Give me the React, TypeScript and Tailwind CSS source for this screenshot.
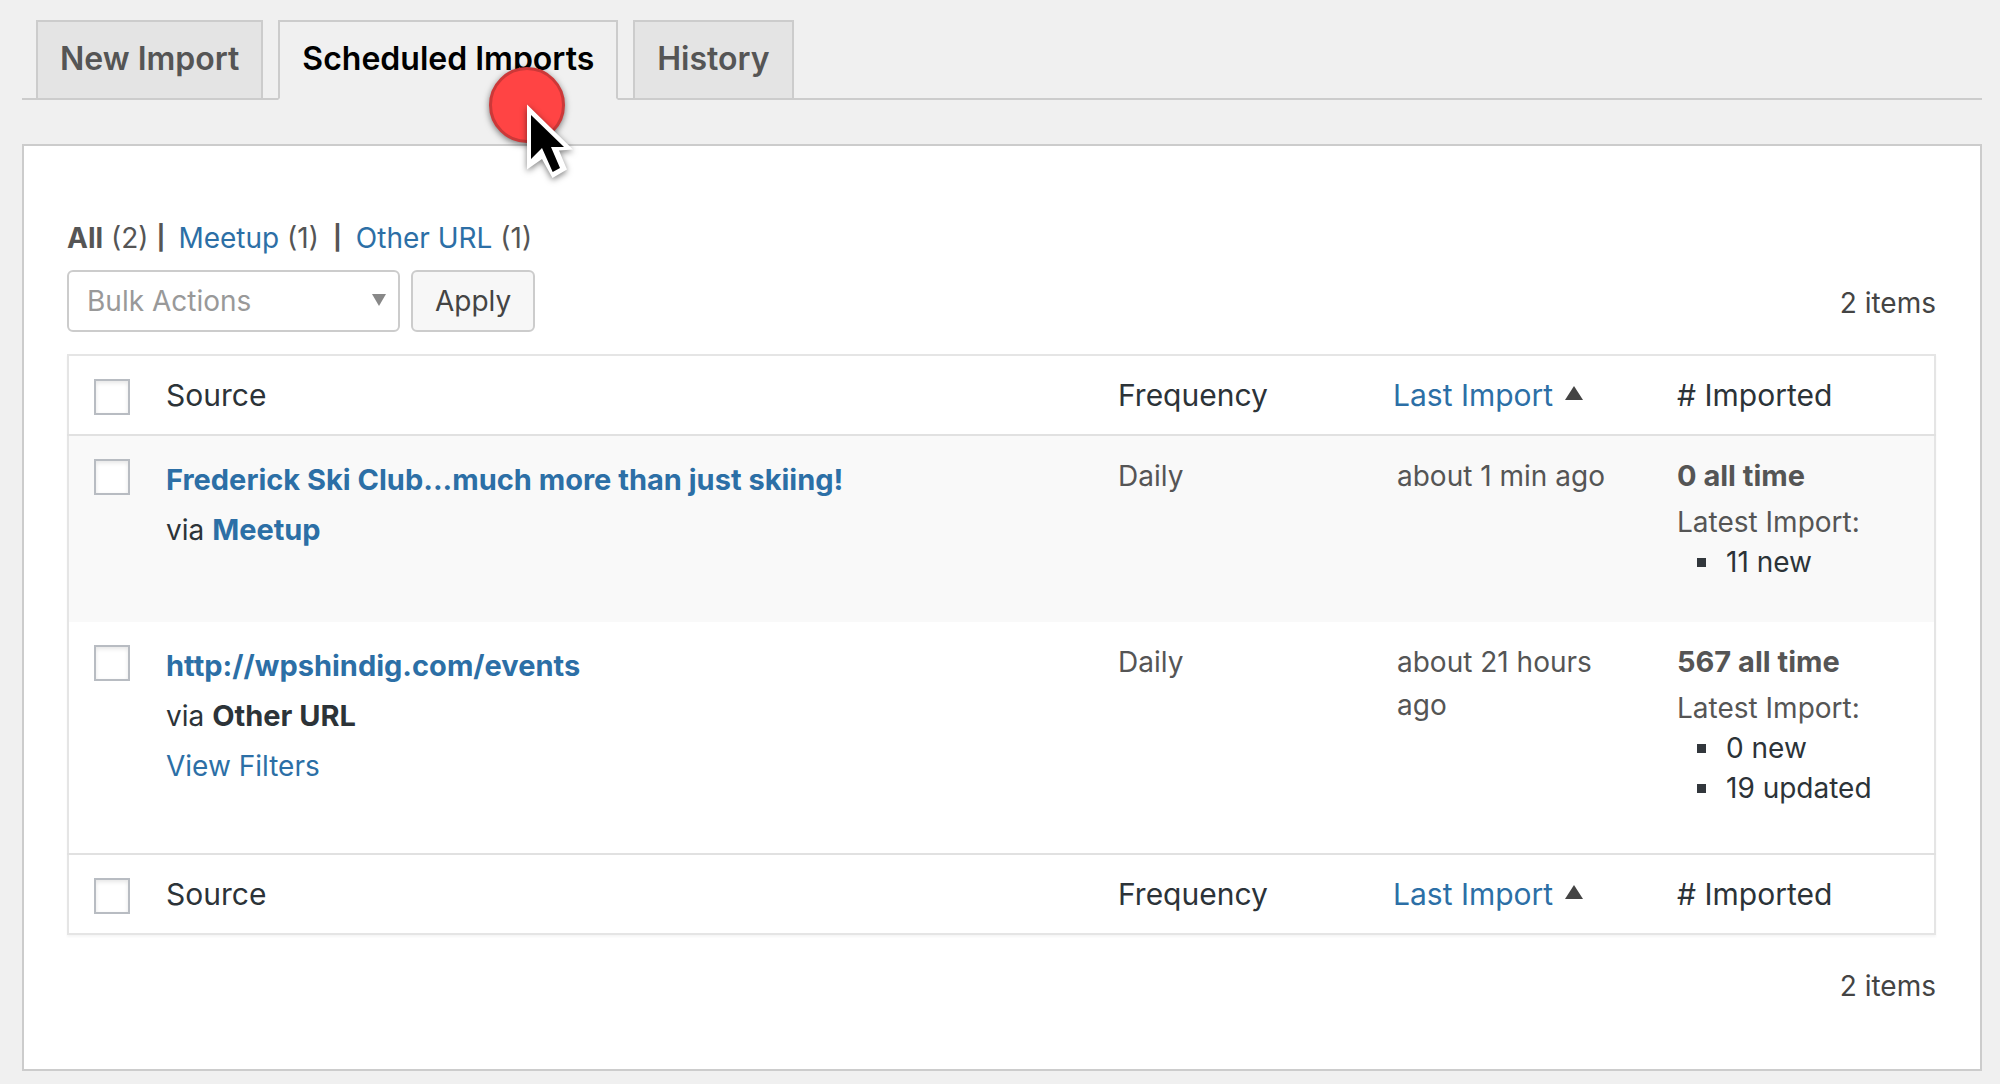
import React from 'react';

const tabs = ['New Import', 'Scheduled Imports', 'History'];

const rows = [
  {
    title: 'Frederick Ski Club...much more than just skiing!',
    origin: 'Meetup',
    originLinked: true,
    filters: false,
    frequency: 'Daily',
    lastImport: 'about 1 min ago',
    total: '0 all time',
    latest: ['11 new'],
  },
  {
    title: 'http://wpshindig.com/events',
    origin: 'Other URL',
    originLinked: false,
    filters: true,
    frequency: 'Daily',
    lastImport: 'about 21 hours ago',
    total: '567 all time',
    latest: ['0 new', '19 updated'],
  },
];

function Checkbox({ label }: { label: string }) {
  return (
    <input
      type="checkbox"
      aria-label={label}
      className="block w-9 h-9 appearance-none border-2 border-[#b8bcc2] bg-white shadow-[inset_0_2px_4px_rgba(0,0,0,0.1)] checked:bg-[#2c6fa6]"
    />
  );
}

function HeadingRow({ label }: { label: string }) {
  return (
    <tr className="h-20 text-left text-[30px] leading-10 text-[#2c3338]">
      <td className="pl-[25px] pt-1">
        <Checkbox label={label} />
      </td>
      <th scope="col" className="font-normal">Source</th>
      <th scope="col" className="font-normal">Frequency</th>
      <th scope="col" className="font-normal">
        <a href="#last-import" className="inline-flex items-center gap-3 text-[#2c6fa6]">
          Last Import
          <svg viewBox="0 0 18 14" className="mb-1 w-[18px] h-[14px] fill-[#444]" aria-hidden="true">
            <path d="M9 0l9 14H0z" />
          </svg>
        </a>
      </th>
      <th scope="col" className="font-normal"># Imported</th>
    </tr>
  );
}

function Pointer() {
  return (
    <svg
      viewBox="0 0 100 130"
      className="absolute left-[202px] top-10 z-10 w-[100px] h-[130px] pointer-events-none overflow-visible"
      aria-hidden="true"
    >
      <circle
        cx="47"
        cy="45"
        r="36.5"
        fill="#ff4444"
        stroke="#cc3838"
        strokeWidth="3"
        className="drop-shadow-[0_2px_3px_rgba(0,0,0,0.5)]"
      />
      <g className="drop-shadow-[0_2px_3px_rgba(0,0,0,0.5)]">
        <path d="M47 44.5L93 89.5 79 90.5 87 109.5 72.5 118 62 99 47 109.5z" fill="#fff" />
        <path d="M51 55L84 87H71L80 108 72.7 112 62 88 51 99z" fill="#000" />
      </g>
    </svg>
  );
}

export default function App() {
  return (
    <div className="min-h-screen bg-[#f0f0f0] pr-[18px] pt-5 pb-[14px] pl-[22px] font-['Inter','Liberation_Sans',sans-serif] text-[#555]">
      <nav className="flex gap-[15px] border-b-2 border-[#ccc] pl-[14px]">
        {tabs.map((tab) => {
          const active = tab === 'Scheduled Imports';
          return (
            <div key={tab} className="relative">
              <a
                href="#tab"
                aria-current={active ? 'page' : undefined}
                className={`-mb-[2px] block border-2 px-[22px] pt-[17px] pb-[19px] text-[32px] leading-10 font-semibold ${
                  active ? 'border-[#ccc] border-b-[#f0f0f0] bg-[#f0f0f0] text-black' : 'border-[#ccc] bg-[#e4e4e4] text-[#555]'
                }`}
              >
                {tab}
              </a>
              {active && <Pointer />}
            </div>
          );
        })}
      </nav>

      <main className="mt-11 border-2 border-[#ccc] bg-white pl-[43px] pr-11 pt-[72px] pb-[63px]">
        <ul className="flex items-center text-[28px] leading-10">
          <li><b>All</b> (2)</li>
          <li aria-hidden="true" className="ml-2 mr-[13px] text-[24px] font-bold">|</li>
          <li><a href="#meetup" className="text-[#2c6fa6]">Meetup</a> (1)</li>
          <li aria-hidden="true" className="mx-[14px] text-[24px] font-bold">|</li>
          <li><a href="#other" className="text-[#2c6fa6]">Other URL</a> (1)</li>
        </ul>

        <div className="mt-3 flex items-center gap-[11px]">
          <div className="relative">
            <select
              aria-label="Bulk Actions"
              className="block w-[333px] h-[62px] appearance-none rounded-md border-2 border-[#ccc] bg-white pl-[18px] text-[28px] text-[#999]"
            >
              <option>Bulk Actions</option>
            </select>
            <svg viewBox="0 0 14 12" className="absolute right-[14px] top-6 w-[14px] h-3 fill-[#888] pointer-events-none" aria-hidden="true">
              <path d="M0 0h14L7 12z" />
            </svg>
          </div>
          <button type="button" className="h-[62px] rounded-md border-2 border-[#ccc] bg-[#f7f7f7] px-[22px] text-[28px] text-[#444]">
            Apply
          </button>
          <span className="ml-auto pt-1 text-[28px] leading-10 text-[#444]">2 items</span>
        </div>

        <table className="mt-[22px] w-full table-fixed border-collapse border-2 border-[#e5e5e5] shadow-[0_2px_2px_rgba(0,0,0,0.04)]">
          <colgroup>
            <col className="w-[98px]" />
            <col />
            <col className="w-[275px]" />
            <col className="w-[284px]" />
            <col className="w-[258px]" />
          </colgroup>
          <thead className="border-b-2 border-[#e1e1e1]">
            <HeadingRow label="Select all" />
          </thead>
          <tbody>
            {rows.map((row) => (
              <tr key={row.title} className="align-top text-[28px] leading-10 odd:bg-[#f9f9f9]">
                <td className="pl-[25px] pt-[23px]">
                  <Checkbox label={`Select ${row.title}`} />
                </td>
                <td className="pt-[19px] pb-[62px] leading-[50px] text-[#2c3338]">
                  <a href="#source" className="block text-[29px] font-bold text-[#2c6fa6]">{row.title}</a>
                  <p>
                    via{' '}
                    {row.originLinked ? (
                      <a href="#origin" className="text-[29px] font-bold text-[#2c6fa6]">{row.origin}</a>
                    ) : (
                      <b className="text-[29px]">{row.origin}</b>
                    )}
                  </p>
                  {row.filters && <a href="#filters" className="block text-[#2c6fa6]">View Filters</a>}
                </td>
                <td className="pt-5">{row.frequency}</td>
                <td className="pt-[19px] pl-1 pr-10 leading-[43px]">{row.lastImport}</td>
                <td className="pt-5 pb-10">
                  <p className="text-[29px] font-bold">{row.total}</p>
                  <p className="mt-[6px]">Latest Import:</p>
                  <ul className="text-[#2c3338]">
                    {row.latest.map((entry) => (
                      <li key={entry} className="flex items-center gap-5 pl-5">
                        <span className="w-[9px] h-[9px] bg-[#32373c]" />
                        {entry}
                      </li>
                    ))}
                  </ul>
                </td>
              </tr>
            ))}
          </tbody>
          <tfoot className="border-t-2 border-[#e1e1e1]">
            <HeadingRow label="Select all rows" />
          </tfoot>
        </table>

        <p className="mt-[31px] text-right text-[28px] leading-10 text-[#444]">2 items</p>
      </main>
    </div>
  );
}
